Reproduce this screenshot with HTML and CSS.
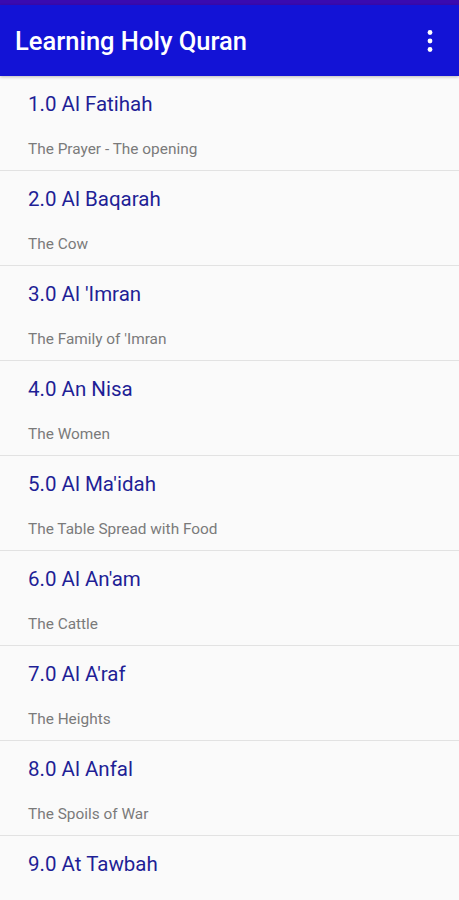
FILE: index.html
```html
<!DOCTYPE html>
<html>
<head>
<meta charset="utf-8">
<link rel="stylesheet" href="styles.css">
</head>
<body>
<div class="status"></div>
<header class="appbar">
  <h1 class="title">Learning Holy Quran</h1>
  <svg class="menu" width="24" height="24" viewBox="0 0 24 24"><circle cx="12" cy="3.5" r="2.4" fill="#fff"/><circle cx="12" cy="12" r="2.4" fill="#fff"/><circle cx="12" cy="20.5" r="2.4" fill="#fff"/></svg>
</header>
<ul class="list">
  <li class="item"><div class="name">1.0 Al Fatihah</div><div class="sub">The Prayer - The opening</div></li>
  <li class="item"><div class="name">2.0 Al Baqarah</div><div class="sub">The Cow</div></li>
  <li class="item"><div class="name">3.0 Al 'Imran</div><div class="sub">The Family of 'Imran</div></li>
  <li class="item"><div class="name">4.0 An Nisa</div><div class="sub">The Women</div></li>
  <li class="item"><div class="name">5.0 Al Ma'idah</div><div class="sub">The Table Spread with Food</div></li>
  <li class="item"><div class="name">6.0 Al An'am</div><div class="sub">The Cattle</div></li>
  <li class="item"><div class="name">7.0 Al A'raf</div><div class="sub">The Heights</div></li>
  <li class="item"><div class="name">8.0 Al Anfal</div><div class="sub">The Spoils of War</div></li>
  <li class="item"><div class="name">9.0 At Tawbah</div><div class="sub">The Repentance</div></li>
</ul>
</body>
</html>
```
FILE: styles.css
```css
html, body {
  margin: 0;
  padding: 0;
  background: #fafafa;
  font-family: Roboto, "Noto Sans", sans-serif;
  overflow: hidden;
  height: 900px;
}
.status {
  height: 5px;
  background: #3a0ab0;
}
.appbar {
  height: 71px;
  background: #1313d6;
  display: flex;
  align-items: center;
  justify-content: space-between;
  padding: 1px 17px 0 15px;
  box-sizing: border-box;
  box-shadow: 0 1px 3px rgba(0,0,0,0.25);
  position: relative;
}
.title {
  margin: 0;
  color: #fff;
  font-size: 25.5px;
  font-weight: 500;
  letter-spacing: 0;
}
.menu {
  display: block;
}
.list {
  list-style: none;
  margin: 0;
  padding: 0;
}
.item {
  height: 94px;
  box-sizing: content-box;
  border-bottom: 1px solid #e2e2e2;
  padding: 0 28px;
  display: flex;
  flex-direction: column;
}
.name {
  margin-top: 16px;
  font-size: 20.5px;
  line-height: 24px;
  color: #1f1f96;
}
.sub {
  margin-top: 24px;
  font-size: 15.4px;
  line-height: 18px;
  color: #7a7a7a;
}
```
